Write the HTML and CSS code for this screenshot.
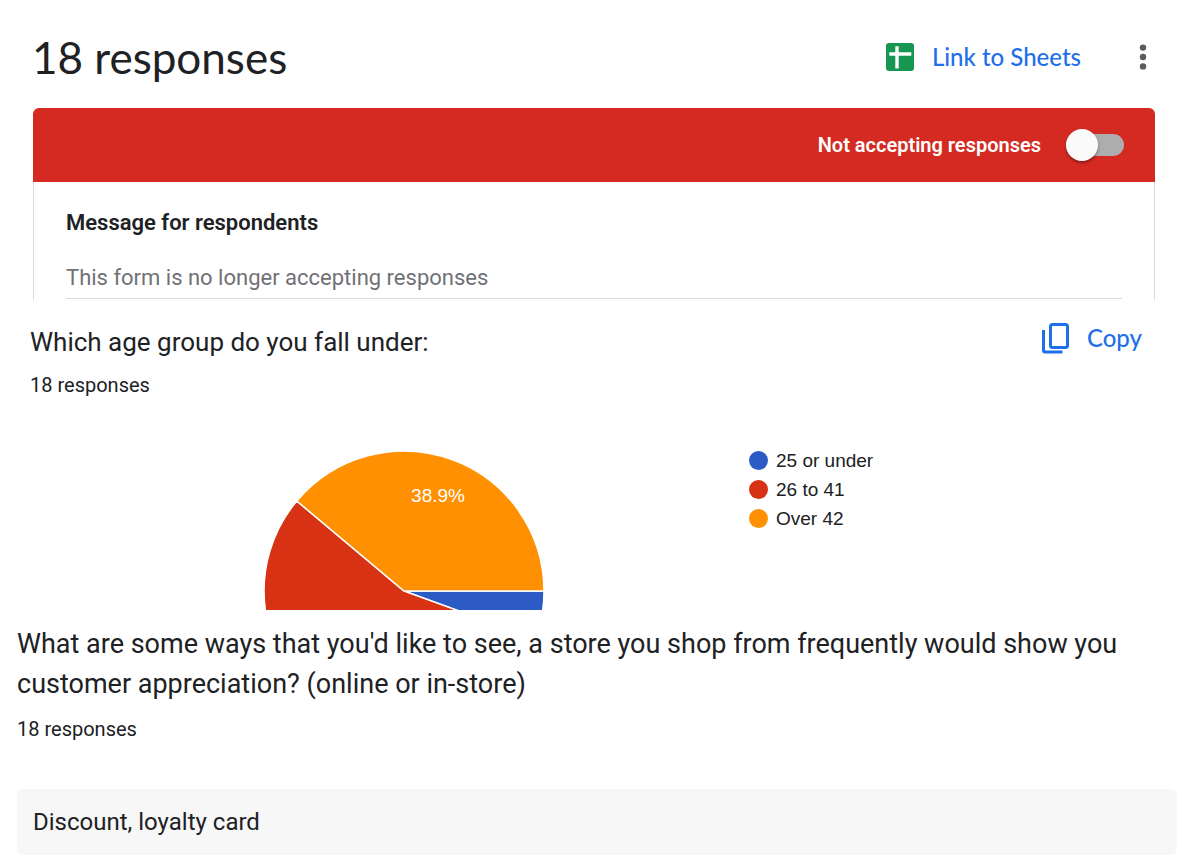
FILE: index.html
```
<!doctype html>
<html lang="en">
<head>
<meta charset="utf-8">
<meta name="viewport" content="width=device-width, initial-scale=1">
<title>Form responses</title>
<link rel="stylesheet" href="styles.css">
</head>

<body>
	<header class="top">
		<h1>18 responses</h1>
		<button class="link-btn" type="button">
			<svg class="sheets-icon" viewBox="0 0 28 28" aria-hidden="true">
				<rect width="28" height="28" rx="3" fill="#169650"/>
				<path d="M3.3 11h22M11 3.3v22.2" stroke="#fff" stroke-width="3.4" fill="none"/>
			</svg>
			Link to Sheets
		</button>
		<button class="more-btn" type="button" aria-label="More options">
			<svg viewBox="0 0 8 28" aria-hidden="true">
				<circle cx="4" cy="4.6" r="3.2"/>
				<circle cx="4" cy="14" r="3.2"/>
				<circle cx="4" cy="23.4" r="3.2"/>
			</svg>
		</button>
	</header>

	<section class="status">
		<div class="status-bar">
			<label for="accepting">Not accepting responses</label>
			<input class="switch" type="checkbox" id="accepting">
		</div>
		<div class="message">
			<label for="message">Message for respondents</label>
			<input type="text" id="message" value="This form is no longer accepting responses">
		</div>
	</section>

	<section class="age">
		<div class="question-head">
			<h2>Which age group do you fall under:</h2>
			<button class="link-btn" type="button">
				<svg class="copy-icon" viewBox="0 0 28 32" aria-hidden="true">
					<rect x="9.5" y="2.5" width="17" height="23" rx="2" fill="none" stroke="#1f6feb" stroke-width="3"/>
					<path d="M2.5 8v20.5q0 1.5 1.5 1.5h17.5" fill="none" stroke="#1f6feb" stroke-width="3"/>
				</svg>
				Copy
			</button>
		</div>
		<p class="count">18 responses</p>
		<div class="chart">
			<!-- only the upper part of the pie shows, the viewBox cuts the rest -->
			<svg class="pie" viewBox="-140 -140 280 159" role="img" aria-label="Age groups">
				<g stroke="#fff" stroke-width="1.5">
					<path d="M0 0H140A140 140 0 0 1 131.6 47.9Z" fill="#2c5bc6"/>
					<path d="M0 0L131.6 47.9A140 140 0 1 1 -107.2 -90Z" fill="#d83214"/>
					<path d="M0 0L-107.2 -90A140 140 0 0 1 140 0Z" fill="#ff9002"/>
				</g>
				<text x="34" y="-89" text-anchor="middle">38.9%</text>
			</svg>
			<ul class="legend">
				<li class="blue">25 or under</li>
				<li class="red">26 to 41</li>
				<li class="orange">Over 42</li>
			</ul>
		</div>
	</section>

	<section class="ideas">
		<h2>What are some ways that you'd like to see, a store you shop from frequently would show you customer appreciation? (online or in-store)</h2>
		<p class="count">18 responses</p>
		<p class="answer">Discount, loyalty card</p>
	</section>
</body>
</html>
```
FILE: styles.css
```
*{
	box-sizing: border-box;
}
body{
	margin: 0;
	background: #fff;
	color: #202124;
	font-family: Roboto, "Liberation Sans", sans-serif;
}
h1, h2, p, ul{
	margin: 0;
	padding: 0;
	font-weight: 400;
}
button{
	padding: 0;
	border: 0;
	background: none;
	cursor: pointer;
}
svg{
	display: block;
}

/* title row */
.top{
	display: flex;
	align-items: center;
	padding: 30px 33px 24px 32px;
}
h1{
	flex: 1;
	font-family: Lato, sans-serif;
	font-size: 44px;
	line-height: 54px;
}
.link-btn{
	display: flex;
	align-items: center;
	gap: 18px;
	color: #1f6feb;
	font-family: Lato, sans-serif;
	font-size: 24px;
	font-weight: 500;
	line-height: 32px;
}
.sheets-icon{
	width: 28px;
	height: 28px;
}
.more-btn{
	margin-left: 58px;
}
.more-btn svg{
	width: 8px;
	height: 28px;
	fill: #5a5b5e;
}

/* closed form card */
.status{
	margin: 0 25px 0 33px;
}
.status-bar{
	display: flex;
	align-items: center;
	justify-content: flex-end;
	gap: 25px;
	height: 74px;
	padding-right: 31px;
	background: #d52a22;
	border-radius: 6px 6px 0 0;
	color: #fff;
	font-size: 20px;
	font-weight: 600;
}
.switch{
	appearance: none;
	display: flex;
	align-items: center;
	width: 58px;
	height: 22px;
	margin: 0;
	border-radius: 11px;
	background: #adadad;
	cursor: pointer;
}
.switch::before{
	content: "";
	width: 32px;
	height: 32px;
	border-radius: 50%;
	background: #fafafa;
	box-shadow: 0 2px 3px rgba(0,0,0,.35);
}
.switch:checked{
	justify-content: flex-end;
}
.message{
	padding: 25px 32px 1px;
	border: solid #dadce0;
	border-width: 0 1px;
}
.message label{
	display: block;
	font-size: 22px;
	font-weight: 600;
	line-height: 32px;
}
.message input{
	display: block;
	width: 100%;
	height: 41px;
	margin-top: 19px;
	padding: 0 0 2px;
	border: 0;
	border-bottom: 1px solid #dadce0;
	background: none;
	color: #707175;
	font: 22px/32px Roboto, sans-serif;
}

/* questions */
h2{
	font-size: 26px;
	line-height: 40px;
}
.count{
	font-size: 20px;
	line-height: 24px;
}
.age{
	padding: 22px 38px 0 30px;
}
.question-head{
	display: flex;
	justify-content: space-between;
	align-items: flex-start;
}
.copy-icon{
	width: 28px;
	height: 32px;
}
.age .count{
	margin-top: 11px;
}
.chart{
	display: flex;
	gap: 205px;
	margin-top: 54px;
	padding-left: 234px;
}
.pie{
	flex: none;
	width: 280px;
	height: 159px;
}
.pie text{
	fill: #fff;
	font: 19px "Liberation Sans", sans-serif;
}
.legend{
	list-style: none;
	font: 19px/29px "Liberation Sans", sans-serif;
	margin-top: -5px;
}
.legend li{
	display: flex;
	align-items: center;
	gap: 8px;
}
.legend li::before{
	content: "";
	width: 19px;
	height: 19px;
	border-radius: 50%;
}
.blue::before{
	background: #2c5bc6;
}
.red::before{
	background: #d83214;
}
.orange::before{
	background: #ff9002;
}
.ideas{
	padding: 14px 3px 4px 17px;
}
.ideas h2{
	font-size: 27px;
}
.ideas .count{
	margin-top: 13px;
}
.answer{
	margin-top: 48px;
	padding: 17px 16px;
	border-radius: 6px;
	background: #f7f7f7;
	font-size: 24px;
	line-height: 32px;
}
```
